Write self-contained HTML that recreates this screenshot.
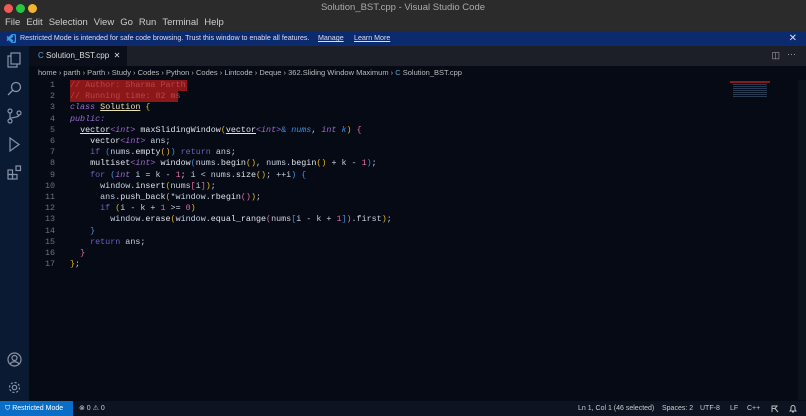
<!DOCTYPE html>
<html><head><meta charset="utf-8"><style>
*{margin:0;padding:0;box-sizing:border-box}
body{width:806px;height:416px;overflow:hidden;background:#050a14;font-family:"Liberation Sans",sans-serif;position:relative;color:#ccc}
.abs{position:absolute}
#title{left:0;top:0;width:806px;height:16px;background:#2b2b2b;color:#aaa;font-size:9.5px;text-align:center;line-height:16px}
.dot{position:absolute;top:4px;width:9px;height:9px;border-radius:50%}
#menu{left:0;top:16px;width:806px;height:15px;background:#2b2b2b;color:#ccc;font-size:9.5px;line-height:14px;padding-left:5px;white-space:nowrap}
#menu span{margin-right:6px}
#banner{left:0;top:31px;width:806px;height:15px;background:#0c2a6e;color:#dde;font-size:7.1px;line-height:15px;padding-left:20px;white-space:nowrap}
#act{left:0;top:46px;width:29px;height:355px;background:#0b1a33}
#tabs{left:29px;top:46px;width:777px;height:20px;background:#1c1f27}
#tab{left:29px;top:46px;width:98px;height:20px;background:#0a0f1a;color:#ddd;font-size:8px;line-height:20px;padding-left:9px}
#crumb{left:38px;top:67px;font-size:7.5px;color:#bbb;line-height:12px;white-space:nowrap}
#code{left:29px;top:80px;font-family:"Liberation Mono",monospace;font-size:8.4px;line-height:11.2px}
.ln{position:absolute;left:0;width:26px;text-align:right;color:#6b7280}
.cl{position:absolute;left:41px;white-space:pre;color:#c8d0e0}
.k{color:#a06ad0;font-style:italic}.f{color:#dfe3ea}.p{color:#e6b422}.b{color:#3b8fe0}.n{color:#e86aa0}.kk{color:#7060b8}
#status{left:0;top:401px;width:806px;height:15px;background:#0d1320;color:#ccc;font-size:7px;line-height:15px;white-space:nowrap}
svg{position:absolute}
</style></head><body>
<div id="title" class="abs">Solution_BST.cpp - Visual Studio Code
<div class="dot" style="left:4px;background:#f15b54"></div><div class="dot" style="left:16px;background:#27c840"></div><div class="dot" style="left:28px;background:#f2b52d"></div></div>
<div id="menu" class="abs"><span>File</span><span>Edit</span><span>Selection</span><span>View</span><span>Go</span><span>Run</span><span>Terminal</span><span>Help</span></div>
<div id="banner" class="abs">Restricted Mode is intended for safe code browsing. Trust this window to enable all features.
<u style="position:absolute;left:318px">Manage</u><u style="position:absolute;left:354px">Learn More</u>
<svg style="left:6px;top:3px" width="10" height="9" viewBox="0 0 10 9"><path d="M7 0L9.5 1.2V7.8L7 9L2 4.5ZM1 2.5L7 7M1 6.5L7 2" stroke="#3b9ae8" stroke-width="1.5" fill="none"/></svg>
<span style="position:absolute;right:9px;top:0;font-size:10px">✕</span></div>
<div id="act" class="abs">
<svg style="left:7px;top:6px" width="15" height="16" viewBox="0 0 15 16" fill="none" stroke="#8892a6" stroke-width="1.2"><rect x="4" y="1" width="9" height="11"/><path d="M4 4H1V15H10V12"/></svg>
<svg style="left:7px;top:35px" width="15" height="15" viewBox="0 0 15 15" fill="none" stroke="#8892a6" stroke-width="1.3"><circle cx="9" cy="6" r="4.5"/><path d="M6 9L1 14"/></svg>
<svg style="left:7px;top:62px" width="15" height="16" viewBox="0 0 15 16" fill="none" stroke="#8892a6" stroke-width="1.2"><circle cx="3" cy="3" r="2"/><circle cx="3" cy="13" r="2"/><circle cx="12" cy="5" r="2"/><path d="M3 5V11M12 7C12 10 3 9 3 11"/></svg>
<svg style="left:7px;top:91px" width="15" height="15" viewBox="0 0 15 15" fill="none" stroke="#8892a6" stroke-width="1.2"><path d="M3 1L12 7.5L3 14Z"/></svg>
<svg style="left:7px;top:119px" width="15" height="15" viewBox="0 0 15 15" fill="none" stroke="#8892a6" stroke-width="1.2"><rect x="1" y="5" width="4.5" height="4.5"/><rect x="1" y="9.5" width="4.5" height="4.5"/><rect x="5.5" y="9.5" width="4.5" height="4.5"/><rect x="9" y="1" width="4.5" height="4.5"/></svg>
<svg style="left:7px;top:306px" width="15" height="15" viewBox="0 0 15 15" fill="none" stroke="#8892a6" stroke-width="1.2"><circle cx="7.5" cy="7.5" r="6.5"/><circle cx="7.5" cy="6" r="2.5"/><path d="M3 12C5 9 10 9 12 12"/></svg>
<svg style="left:7px;top:334px" width="15" height="15" viewBox="0 0 15 15" fill="none" stroke="#8892a6" stroke-width="1.2"><circle cx="7.5" cy="7.5" r="2.2"/><circle cx="7.5" cy="7.5" r="5" stroke-dasharray="2.2 1.7"/></svg>
</div>
<div id="tabs" class="abs"><span style="position:absolute;right:26px;top:4px;font-size:9px;color:#aaa">◫</span><span style="position:absolute;right:10px;top:3px;font-size:9px;color:#aaa">···</span></div>
<div id="tab" class="abs"><span style="color:#5aa0d0">C</span> Solution_BST.cpp &nbsp;✕</div>
<div id="crumb" class="abs">home › parth › Parth › Study › Codes › Python › Codes › Lintcode › Deque › 362.Sliding Window Maximum › <span style="color:#5aa0d0">C</span> Solution_BST.cpp</div>
<div class="abs" style="left:730px;top:81px;width:40px;height:2px;background:#8a1a1a"></div>
<div class="abs" style="left:733px;top:84px;width:34px;height:14px;background:repeating-linear-gradient(#2a3a50 0 1px,transparent 1px 2px)"></div>
<div class="abs" style="left:798px;top:80px;width:8px;height:320px;background:#0c121c"></div>
<div id="code" class="abs">
<div class="abs" style="left:41px;top:0;width:117px;height:11.2px;background:#8a1818"></div>
<div class="abs" style="left:41px;top:11.2px;width:108px;height:11.2px;background:#8a1818"></div>
<div class="ln" style="top:0">1</div><div class="cl" style="top:0;color:#c04050">// Author: Sharma Parth</div>
<div class="ln" style="top:11.2px">2</div><div class="cl" style="top:11.2px;color:#c04050">// Running time: 82 ms</div>
<div class="ln" style="top:22.4px">3</div><div class="cl" style="top:22.4px"><span class="k">class</span> <u class="f" style="color:#e8e0b0">Solution</u> <span class="p">{</span></div>
<div class="ln" style="top:33.6px">4</div><div class="cl" style="top:33.6px"><span class="k">public:</span></div>
<div class="ln" style="top:44.8px">5</div><div class="cl" style="top:44.8px">  <u class="f">vector</u><span class="k">&lt;int&gt;</span> <span class="f">maxSlidingWindow</span><span class="p">(</span><u class="f">vector</u><span class="k">&lt;int&gt;</span><span class="b">&amp;</span> <span class="b" style="font-style:italic">nums</span>, <span class="k">int</span> <span class="b" style="font-style:italic">k</span><span class="p">)</span> <span class="n">{</span></div>
<div class="ln" style="top:56px">6</div><div class="cl" style="top:56px">    <span class="f">vector</span><span class="k">&lt;int&gt;</span> ans;</div>
<div class="ln" style="top:67.2px">7</div><div class="cl" style="top:67.2px">    <span class="kk">if</span> <span class="b">(</span>nums.<span class="f">empty</span><span class="p">()</span><span class="b">)</span> <span class="kk">return</span> ans;</div>
<div class="ln" style="top:78.4px">8</div><div class="cl" style="top:78.4px">    <span class="f">multiset</span><span class="k">&lt;int&gt;</span> <span class="f">window</span><span class="b">(</span>nums.<span class="f">begin</span><span class="p">()</span>, nums.<span class="f">begin</span><span class="p">()</span> + k - <span class="n">1</span><span class="b">)</span>;</div>
<div class="ln" style="top:89.6px">9</div><div class="cl" style="top:89.6px">    <span class="kk">for</span> <span class="b">(</span><span class="k">int</span> i = k - <span class="n">1</span>; i &lt; nums.<span class="f">size</span><span class="p">()</span>; ++i<span class="b">)</span> <span class="b">{</span></div>
<div class="ln" style="top:100.8px">10</div><div class="cl" style="top:100.8px">      window.<span class="f">insert</span><span class="p">(</span>nums<span class="n">[</span>i<span class="n">]</span><span class="p">)</span>;</div>
<div class="ln" style="top:112px">11</div><div class="cl" style="top:112px">      ans.<span class="f">push_back</span><span class="p">(</span>*window.<span class="f">rbegin</span><span class="n">()</span><span class="p">)</span>;</div>
<div class="ln" style="top:123.2px">12</div><div class="cl" style="top:123.2px">      <span class="kk">if</span> <span class="p">(</span>i - k + <span class="n">1</span> &gt;= <span class="n">0</span><span class="p">)</span></div>
<div class="ln" style="top:134.4px">13</div><div class="cl" style="top:134.4px">        window.<span class="f">erase</span><span class="p">(</span>window.<span class="f">equal_range</span><span class="n">(</span>nums<span class="b">[</span>i - k + <span class="n">1</span><span class="b">]</span><span class="n">)</span>.first<span class="p">)</span>;</div>
<div class="ln" style="top:145.6px">14</div><div class="cl" style="top:145.6px">    <span class="b">}</span></div>
<div class="ln" style="top:156.8px">15</div><div class="cl" style="top:156.8px">    <span class="kk">return</span> ans;</div>
<div class="ln" style="top:168px">16</div><div class="cl" style="top:168px">  <span class="n">}</span></div>
<div class="ln" style="top:179.2px">17</div><div class="cl" style="top:179.2px"><span class="p">}</span>;</div>
</div>
<div id="status" class="abs">
<div class="abs" style="left:0;top:0;width:73px;height:15px;background:#0a6ec8;color:#fff;padding-left:5px">⛉ Restricted Mode</div>
<div class="abs" style="left:79px;top:0">⊗ 0 ⚠ 0</div>
<div class="abs" style="left:578px;top:0">Ln 1, Col 1 (46 selected)</div>
<div class="abs" style="left:662px;top:0">Spaces: 2</div>
<div class="abs" style="left:700px;top:0">UTF-8</div>
<div class="abs" style="left:730px;top:0">LF</div>
<div class="abs" style="left:747px;top:0">C++</div>
<svg style="left:771px;top:4px" width="8" height="8" viewBox="0 0 8 8" fill="none" stroke="#bbb"><path d="M1 7V1H6L4 3.5H1M4 3.5L7 7"/></svg>
<svg style="left:789px;top:3px" width="8" height="9" viewBox="0 0 8 9" fill="none" stroke="#bbb"><path d="M1 7H7L6 5.5V3.5A2 2 0 0 0 2 3.5V5.5ZM3 8H5"/></svg>
</div>
</body></html>
